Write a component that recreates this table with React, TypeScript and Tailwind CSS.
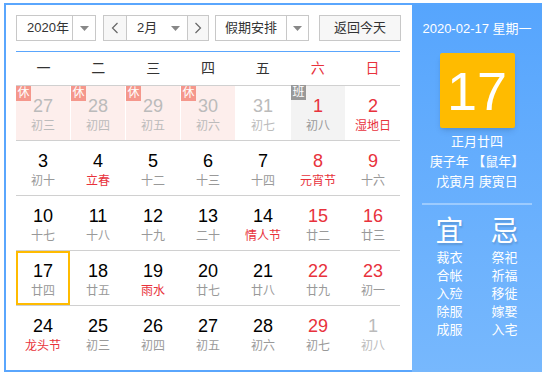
const font = { fontFamily: '"Liberation Sans", "Noto Sans CJK SC", sans-serif' };

type Day = {
  n: number;
  l: string;
  out?: boolean;
  redNum?: boolean;
  redL?: boolean;
  rest?: boolean;
  work?: boolean;
  sel?: boolean;
};

const rows: Day[][] = [
  [
    { n: 27, l: '初三', out: true, rest: true },
    { n: 28, l: '初四', out: true, rest: true },
    { n: 29, l: '初五', out: true, rest: true },
    { n: 30, l: '初六', out: true, rest: true },
    { n: 31, l: '初七', out: true },
    { n: 1, l: '初八', redNum: true, work: true },
    { n: 2, l: '湿地日', redNum: true, redL: true },
  ],
  [
    { n: 3, l: '初十' },
    { n: 4, l: '立春', redL: true },
    { n: 5, l: '十二' },
    { n: 6, l: '十三' },
    { n: 7, l: '十四' },
    { n: 8, l: '元宵节', redNum: true, redL: true },
    { n: 9, l: '十六', redNum: true },
  ],
  [
    { n: 10, l: '十七' },
    { n: 11, l: '十八' },
    { n: 12, l: '十九' },
    { n: 13, l: '二十' },
    { n: 14, l: '情人节', redL: true },
    { n: 15, l: '廿二', redNum: true },
    { n: 16, l: '廿三', redNum: true },
  ],
  [
    { n: 17, l: '廿四', sel: true },
    { n: 18, l: '廿五' },
    { n: 19, l: '雨水', redL: true },
    { n: 20, l: '廿七' },
    { n: 21, l: '廿八' },
    { n: 22, l: '廿九', redNum: true },
    { n: 23, l: '初一', redNum: true },
  ],
  [
    { n: 24, l: '龙头节', redL: true },
    { n: 25, l: '初三' },
    { n: 26, l: '初四' },
    { n: 27, l: '初五' },
    { n: 28, l: '初六' },
    { n: 29, l: '初七', redNum: true },
    { n: 1, l: '初八', out: true },
  ],
];

const yi = ['裁衣', '合帐', '入殓', '除服', '成服'];
const ji = ['祭祀', '祈福', '移徙', '嫁娶', '入宅'];

const Caret = () => (
  <svg width="9" height="5" viewBox="0 0 9 5">
    <path d="M0 0 L9 0 L4.5 5 Z" fill="#888" />
  </svg>
);

const Chevron = ({ right }: { right?: boolean }) => (
  <svg width="8" height="12" viewBox="0 0 8 12">
    <path
      d={right ? 'M1.5 1 L6.5 6 L1.5 11' : 'M6.5 1 L1.5 6 L6.5 11'}
      fill="none"
      stroke="#666"
      strokeWidth="1.2"
    />
  </svg>
);

const Cell = ({ d }: { d: Day }) => {
  const numColor = d.out ? 'text-[#bbbbbb]' : d.redNum ? 'text-[#e8323c]' : 'text-black';
  const lColor = d.out ? 'text-[#bbbbbb]' : d.redL ? 'text-[#e8323c]' : 'text-[#999999]';
  const bg = d.rest ? 'bg-[#fdeeec]' : d.work ? 'bg-[#f3f3f3]' : 'bg-white';
  return (
    <div
      className={`relative h-[54px] flex flex-col items-center ${bg} ${
        d.sel ? 'border-2 border-[#ffbb00] pt-[8px]' : 'pt-[10px]'
      }`}
    >
      {d.rest && (
        <span className="absolute left-0 top-0 w-[15px] h-[15px] bg-[#f5978c] text-white text-[12px] leading-[15px] text-center">
          休
        </span>
      )}
      {d.work && (
        <span className="absolute left-0 -top-[1px] w-[15px] h-[15px] bg-[#999999] text-white text-[12px] leading-[15px] text-center">
          班
        </span>
      )}
      <span className={`text-[18px] leading-[20px] ${numColor}`}>{d.n}</span>
      <span className={`text-[12px] leading-[16px] mt-[2px] ${lColor}`}>{d.l}</span>
    </div>
  );
};

export default function App() {
  return (
    <div className="w-[547px] h-[377px] bg-white" style={font}>
      <div className="ml-[4px] pt-[3px] flex">
        <div className="w-[408px] h-[369px] border-l-2 border-y-2 border-[#5aa6fd] pl-[10px] pt-[10px]">
          <div className="flex items-center h-[26px] text-[13px] text-[#333333]">
            <div className="flex w-[80px] h-[26px] border border-[#c8c8c8]">
              <div className="w-[55px] pl-[10px] leading-[24px]">2020年</div>
              <div className="flex-1 border-l border-[#c8c8c8] flex items-center justify-center">
                <Caret />
              </div>
            </div>
            <div className="flex ml-[7px] w-[106px] h-[26px] border border-[#c8c8c8]">
              <div className="w-[22px] bg-[#f7f7f7] flex items-center justify-center">
                <Chevron />
              </div>
              <div className="w-[62px] border-x border-[#c8c8c8] flex items-center justify-between pl-[10px] pr-[7px]">
                <span>2月</span>
                <Caret />
              </div>
              <div className="flex-1 bg-[#f7f7f7] flex items-center justify-center">
                <Chevron right />
              </div>
            </div>
            <div className="flex ml-[6px] w-[94px] h-[26px] border border-[#c8c8c8]">
              <div className="w-[70px] leading-[24px] text-center">假期安排</div>
              <div className="flex-1 border-l border-[#c8c8c8] flex items-center justify-center">
                <Caret />
              </div>
            </div>
            <div className="ml-[10px] w-[82px] h-[26px] border border-[#c8c8c8] bg-[#f7f7f7] leading-[24px] text-center">
              返回今天
            </div>
          </div>
          <div className="w-[384px] mt-[10px] h-px bg-[#5aa6fd]" />
          <div className="w-[384px] grid grid-cols-7 h-[33px] items-center text-[14px] text-center text-[#333333]">
            {['一', '二', '三', '四', '五', '六', '日'].map((w, i) => (
              <span key={w} className={i >= 5 ? 'text-[#e8323c]' : ''}>
                {w}
              </span>
            ))}
          </div>
          {rows.map((r, i) => (
            <div key={i} className="w-[384px] grid grid-cols-7 gap-x-px border-t border-[#d0d0d0]">
              {r.map((d, j) => (
                <Cell key={j} d={d} />
              ))}
            </div>
          ))}
        </div>
        <div className="w-[130px] h-[369px] bg-gradient-to-b from-[#56a5fd] to-[#77b8fd] flex flex-col items-center text-white text-[13px]">
          <div className="mt-[16px] leading-[20px]">2020-02-17 星期一</div>
          <div className="mt-[14px] w-[75px] h-[75px] bg-[#ffbb00] rounded-[2px] shadow-md flex items-center justify-center text-[54px] leading-none">
            17
          </div>
          <div className="mt-[4px] leading-[20px]">正月廿四</div>
          <div className="leading-[20px]">庚子年 【鼠年】</div>
          <div className="leading-[20px]">戊寅月 庚寅日</div>
          <div className="mt-[11px] w-[110px] h-[2px] bg-white/35" />
          <div className="mt-[11px] flex">
            <div className="w-[55px] flex flex-col items-center">
              <span className="text-[28px] leading-[32px] [text-shadow:1px_2px_2px_rgba(0,0,0,0.15)]">宜</span>
              <div className="mt-[1px] flex flex-col items-center leading-[18px]">
                {yi.map((t) => (
                  <span key={t}>{t}</span>
                ))}
              </div>
            </div>
            <div className="w-[55px] flex flex-col items-center">
              <span className="text-[28px] leading-[32px] [text-shadow:1px_2px_2px_rgba(0,0,0,0.15)]">忌</span>
              <div className="mt-[1px] flex flex-col items-center leading-[18px]">
                {ji.map((t) => (
                  <span key={t}>{t}</span>
                ))}
              </div>
            </div>
          </div>
        </div>
      </div>
    </div>
  );
}
